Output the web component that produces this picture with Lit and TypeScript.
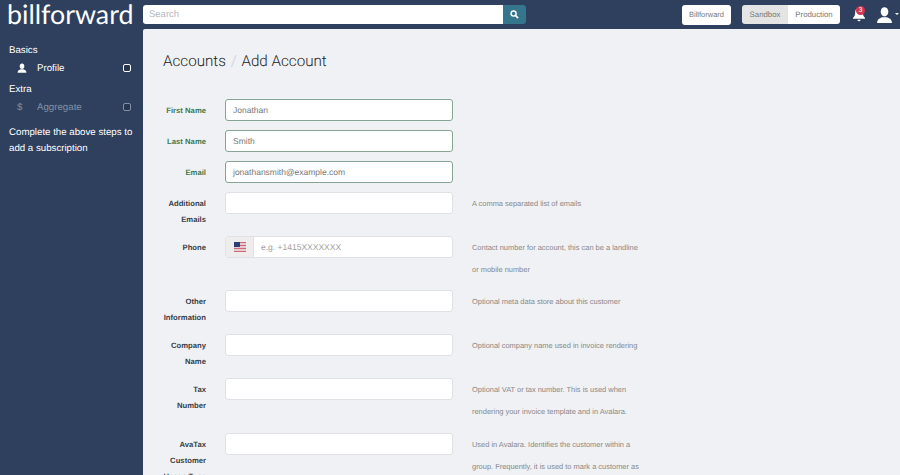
import { LitElement, html, css, svg } from "lit";
import { customElement } from "lit/decorators.js";

const rows = [
  { label: ["First Name"], value: "Jonathan", ok: true, h: 31 },
  { label: ["Last Name"], value: "Smith", ok: true, h: 31 },
  { label: ["Email"], value: "jonathansmith@example.com", ok: true, h: 31 },
  { label: ["Additional", "Emails"], h: 44, help: ["A comma separated list of emails"] },
  { label: ["Phone"], phone: true, h: 54, help: ["Contact number for account, this can be a landline", "or mobile number"] },
  { label: ["Other", "Information"], h: 44, help: ["Optional meta data store about this customer"] },
  { label: ["Company", "Name"], h: 44, help: ["Optional company name used in invoice rendering"] },
  { label: ["Tax", "Number"], h: 55, help: ["Optional VAT or tax number. This is used when", "rendering your invoice template and in Avalara."] },
  { label: ["AvaTax", "Customer", "Usage Type"], h: 60, help: ["Used in Avalara. Identifies the customer within a", "group. Frequently, it is used to mark a customer as"] },
] as { label: string[]; value?: string; ok?: boolean; h: number; help?: string[]; phone?: boolean }[];

const flag = svg`<svg width="12" height="10" viewBox="0 0 12 10"><rect width="12" height="10" fill="#e9c9cd"/><rect y="0" width="12" height="1" fill="#c96c78"/><rect y="3" width="12" height="1" fill="#c96c78"/><rect y="6" width="12" height="1" fill="#c96c78"/><rect y="9" width="12" height="1" fill="#c96c78"/><rect width="6" height="5" fill="#2c3e78"/></svg>`;

const person = svg`<svg viewBox="0 0 16 16" width="100%" height="100%"><ellipse cx="8" cy="5" rx="3.600" ry="4.400" fill="currentColor"/><path d="M1 15.500c0-3.400 2.600-4.600 5-5.400h4c2.400.8 5 2 5 5.400z" fill="currentColor"/></svg>`;

@customElement("app-root")
export class AppRoot extends LitElement {
  static styles = css`
    :host { display: block; width: 900px; height: 475px; overflow: hidden; background: #2e405e; font-family: "Liberation Sans", Arial, sans-serif; text-rendering: geometricPrecision; }
    .top { height: 29px; display: flex; align-items: flex-start; }
    .logo { width: 143px; height: 33px; margin-top: -2px; flex: none; padding-left: 7px; box-sizing: border-box; font-family: Lato, sans-serif; font-size: 26.800px; line-height: 33px; color: #fff; font-weight: 400; white-space: nowrap; }
    .search { display: flex; margin-top: 5px; }
    .search .box { width: 360px; height: 19px; background: #fff; border-radius: 3px 0 0 3px; font-size: 9.500px; line-height: 19px; color: #b5b8bd; padding-left: 6px; box-sizing: border-box; }
    .search .btn { width: 23px; height: 19px; background: #35768c; border-radius: 0 3px 3px 0; display: flex; align-items: center; justify-content: center; }
    .right { margin-left: auto; display: flex; align-items: flex-start; margin-top: 5px; padding-right: 1px; }
    .bf { width: 49px; height: 20px; box-sizing: border-box; background: #fff; border-radius: 3px; font-size: 7.500px; line-height: 20px; text-align: center; color: #777; }
    .seg { display: flex; margin-left: 11px; height: 19px; border-radius: 3px; overflow: hidden; font-size: 7.800px; line-height: 19px; color: #777; text-align: center; }
    .seg .a { width: 46px; background: #e4e4e4; }
    .seg .b { width: 52px; background: #fff; }
    .bell { position: relative; width: 14px; height: 20px; margin-left: 12px; color: #fff; }
    .badge { position: absolute; left: 4px; top: 1px; width: 9px; height: 9px; border-radius: 50%; background: #d0364c; color: #fff; font-size: 7px; line-height: 9px; text-align: center; }
    .user { display: flex; margin-left: 10px; margin-top: 1px; color: #fff; }
    .user .i { width: 17px; height: 18px; }
    .caret { width: 0; height: 0; border: 2px solid transparent; border-top-color: #fff; margin: 7px 0 0 2px; }
    .body { display: flex; height: 446px; }
    .side { width: 143px; flex: none; box-sizing: border-box; padding: 15px 0 0 9px; color: #fff; font-size: 9.700px; }
    .head { height: 13px; line-height: 14px; }
    .item { display: flex; align-items: center; height: 22px; margin-bottom: 4px; }
    .item .ico { width: 28px; padding-left: 8px; box-sizing: border-box; flex: none; display: flex; }
    .item .pi { width: 10px; height: 10px; }
    .item .txt { flex: 1; }
    .item .chk { width: 6px; height: 6px; border: 1px solid currentColor; background: rgba(0,0,0,.15); border-radius: 2px; margin-right: 12px; }
    .item.dim { color: #8391a5; }
    .note { margin-top: 7px; line-height: 16px; padding-right: 4px; }
    .main { flex: 1; background: #f0f1f5; border-top-left-radius: 2px; padding: 22px 0 0 20px; box-sizing: border-box; overflow: hidden; }
    h1 { margin: 0; font-family: Roboto, sans-serif; font-weight: 300; font-size: 15.200px; line-height: 20px; color: #222; height: 48px; white-space: nowrap; }
    h1 span { color: #c8ccd2; margin: 0 1px; }
    .row { display: flex; align-items: flex-start; }
    .lab { width: 43px; flex: none; text-align: right; font-size: 7.700px; font-weight: 700; line-height: 16px; color: #3a3f47; padding-top: 4px; margin-right: 19px; white-space: nowrap; }
    .ok .lab { color: #3f7a4f; }
    .ctl { width: 228px; height: 22px; box-sizing: border-box; flex: none; background: #fff; border: 1px solid #dfe1e6; border-radius: 3px; font-size: 8.500px; line-height: 20px; padding-left: 7px; color: #777; white-space: nowrap; }
    .ok .ctl { border-color: #86a592; }
    .phone { display: flex; padding-left: 0; color: #a0a0a0; }
    .cc { width: 27px; height: 20px; background: #eeeced; border-right: 1px solid #dfe1e6; display: flex; align-items: center; justify-content: center; margin-right: 7px; border-radius: 2px 0 0 2px; }
    .help { margin-left: 19px; padding-top: 1px; font-size: 7.450px; line-height: 22px; color: #888; white-space: nowrap; }
  `;

  render() {
    return html`
      <div class="top">
        <div class="logo">billforward</div>
        <div class="search">
          <div class="box">Search</div>
          <div class="btn"><svg width="9" height="9" viewBox="0 0 10 10"><circle cx="4" cy="4" r="2.800" fill="none" stroke="#fff" stroke-width="1.600"/><path d="M6 6l3 3" stroke="#fff" stroke-width="1.800"/></svg></div>
        </div>
        <div class="right">
          <div class="bf">Billforward</div>
          <div class="seg"><div class="a">Sandbox</div><div class="b">Production</div></div>
          <div class="bell">
            <svg width="14" height="18" viewBox="0 0 14 18"><path d="M7 3c-2.600 0-3.800 2-3.800 4.200 0 3-1 4.400-2.200 5.600v1h12v-1c-1.200-1.200-2.200-2.600-2.200-5.600C10.800 5 9.600 3 7 3z" fill="currentColor"/><path d="M5.500 14.800a1.500 1.500 0 0 0 3 0z" fill="currentColor"/></svg>
            <div class="badge">3</div>
          </div>
          <div class="user"><div class="i">${person}</div><div class="caret"></div></div>
        </div>
      </div>
      <div class="body">
        <div class="side">
          <div class="head">Basics</div>
          <div class="item"><div class="ico"><div class="pi">${person}</div></div><div class="txt">Profile</div><div class="chk"></div></div>
          <div class="head">Extra</div>
          <div class="item dim"><div class="ico">$</div><div class="txt">Aggregate</div><div class="chk"></div></div>
          <div class="note">Complete the above steps to add a subscription</div>
        </div>
        <div class="main">
          <h1>Accounts <span>/</span> Add Account</h1>
          ${rows.map((r) => html`
            <div class="row ${r.ok ? "ok" : ""}" style="height:${r.h}px">
              <div class="lab">${r.label.map((l) => html`<div>${l}</div>`)}</div>
              ${r.phone
                ? html`<div class="ctl phone"><div class="cc">${flag}</div>e.g. +1415XXXXXXX</div>`
                : html`<div class="ctl">${r.value ?? ""}</div>`}
              ${r.help ? html`<div class="help">${r.help.map((l) => html`<div>${l}</div>`)}</div>` : ""}
            </div>`)}
        </div>
      </div>
    `;
  }
}
